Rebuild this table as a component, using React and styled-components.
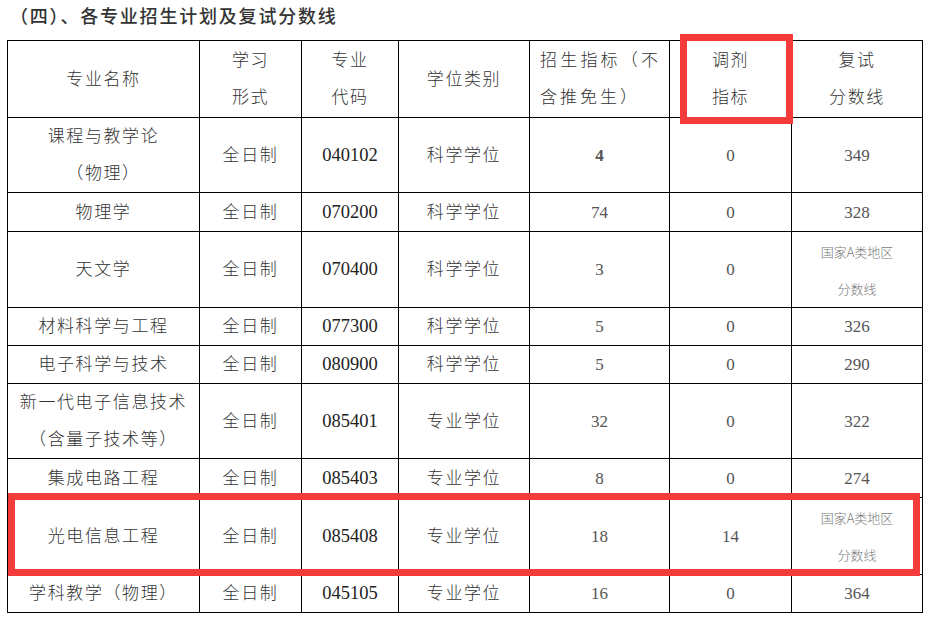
import styled, { createGlobalStyle } from 'styled-components';

const Global = createGlobalStyle`
  body {
    margin: 0;
    background: #fff;
    font-family: "Liberation Serif", "Noto Sans CJK SC", serif;
  }
`;

const Page = styled.div`
  width: 941px;
  padding: 5px 0 0 7px;
  box-sizing: border-box;
`;

const Title = styled.h3`
  margin: 0 0 10px 3px;
  height: 25px;
  line-height: 25px;
  font-size: 18px;
  font-weight: 500;
  color: #333;
  letter-spacing: 1.8px;
`;

const Frame = styled.div`
  position: relative;
  width: 915px;
`;

const Table = styled.table`
  width: 915px;
  border-collapse: collapse;
  table-layout: fixed;
  border: 1.5px solid #000;
`;

const Row = styled.tr`
  height: ${p => p.$h}px;
`;

const Cell = styled.td`
  border: 1.5px solid #000;
  padding: 0 4px;
  text-align: center;
  vertical-align: middle;
  font-size: 17px;
  line-height: 37px;
  color: ${p => (p.$num ? '#555' : '#333')};
  font-weight: ${p => (p.$bold ? 700 : 300)};
  letter-spacing: ${p => (p.$num ? '0' : '1.6px')};
`;

const HeadCell = styled(Cell)`
  position: relative;
  text-align: ${p => (p.$justify ? 'justify' : 'center')};
  padding: ${p => (p.$justify ? '0 8px 0 10px' : '0 4px')};
  text-align-last: ${p => (p.$justify ? 'left' : 'auto')};
  letter-spacing: ${p => (p.$justify ? '3px' : '1.6px')};
`;

const Code = styled.span`
  color: #222;
  font-size: 18.5px;
  font-weight: 400;
  letter-spacing: 0;
`;

const Note = styled.div`
  font-family: "Noto Sans CJK SC", sans-serif;
  font-size: 13px;
  line-height: 37px;
  color: #777;
  letter-spacing: 0;
`;

const Mark = styled.div`
  position: absolute;
  border: 7px solid #f33b3b;
  box-sizing: border-box;
  pointer-events: none;
`;

const HeadMark = styled(Mark)`
  left: 10px;
  right: -2px;
  top: -7px;
  bottom: -7px;
`;

const RowMark = styled(Mark)`
  left: 1px;
  top: 453px;
  width: 912px;
  height: 83px;
`;

const widths = [192, 102, 97, 131, 140, 122, 131];

const rows = [
  { name: ['课程与教学论', '（物理）'], code: '040102', type: '科学学位', quota: '4', bold: true, adjust: '0', score: '349', h: 75 },
  { name: ['物理学'], code: '070200', type: '科学学位', quota: '74', adjust: '0', score: '328', h: 39 },
  { name: ['天文学'], code: '070400', type: '科学学位', quota: '3', adjust: '0', score: null, h: 76 },
  { name: ['材料科学与工程'], code: '077300', type: '科学学位', quota: '5', adjust: '0', score: '326', h: 38 },
  { name: ['电子科学与技术'], code: '080900', type: '科学学位', quota: '5', adjust: '0', score: '290', h: 38 },
  { name: ['新一代电子信息技术', '（含量子技术等）'], code: '085401', type: '专业学位', quota: '32', adjust: '0', score: '322', h: 75 },
  { name: ['集成电路工程'], code: '085403', type: '专业学位', quota: '8', adjust: '0', score: '274', h: 39 },
  { name: ['光电信息工程'], code: '085408', type: '专业学位', quota: '18', adjust: '14', score: null, h: 77 },
  { name: ['学科教学（物理）'], code: '045105', type: '专业学位', quota: '16', adjust: '0', score: '364', h: 38 },
];

const Lines = ({ items }) => items.map((t, i) => <div key={i}>{t}</div>);

export default function App() {
  return (
    <Page>
      <Global />
      <Title>（四）、各专业招生计划及复试分数线</Title>
      <Frame>
        <Table>
          <colgroup>
            {widths.map((w, i) => <col key={i} style={{ width: w }} />)}
          </colgroup>
          <tbody>
            <Row $h={77}>
              <HeadCell>专业名称</HeadCell>
              <HeadCell><Lines items={['学习', '形式']} /></HeadCell>
              <HeadCell><Lines items={['专业', '代码']} /></HeadCell>
              <HeadCell>学位类别</HeadCell>
              <HeadCell $justify>招生指标（不含推免生）</HeadCell>
              <HeadCell>
                <Lines items={['调剂', '指标']} />
                <HeadMark />
              </HeadCell>
              <HeadCell><Lines items={['复试', '分数线']} /></HeadCell>
            </Row>
            {rows.map(r => (
              <Row key={r.code} $h={r.h}>
                <Cell><Lines items={r.name} /></Cell>
                <Cell>全日制</Cell>
                <Cell><Code>{r.code}</Code></Cell>
                <Cell>{r.type}</Cell>
                <Cell $num $bold={r.bold}>{r.quota}</Cell>
                <Cell $num>{r.adjust}</Cell>
                <Cell $num>
                  {r.score ?? <Note><div>国家A类地区</div><div>分数线</div></Note>}
                </Cell>
              </Row>
            ))}
          </tbody>
        </Table>
        <RowMark />
      </Frame>
    </Page>
  );
}
